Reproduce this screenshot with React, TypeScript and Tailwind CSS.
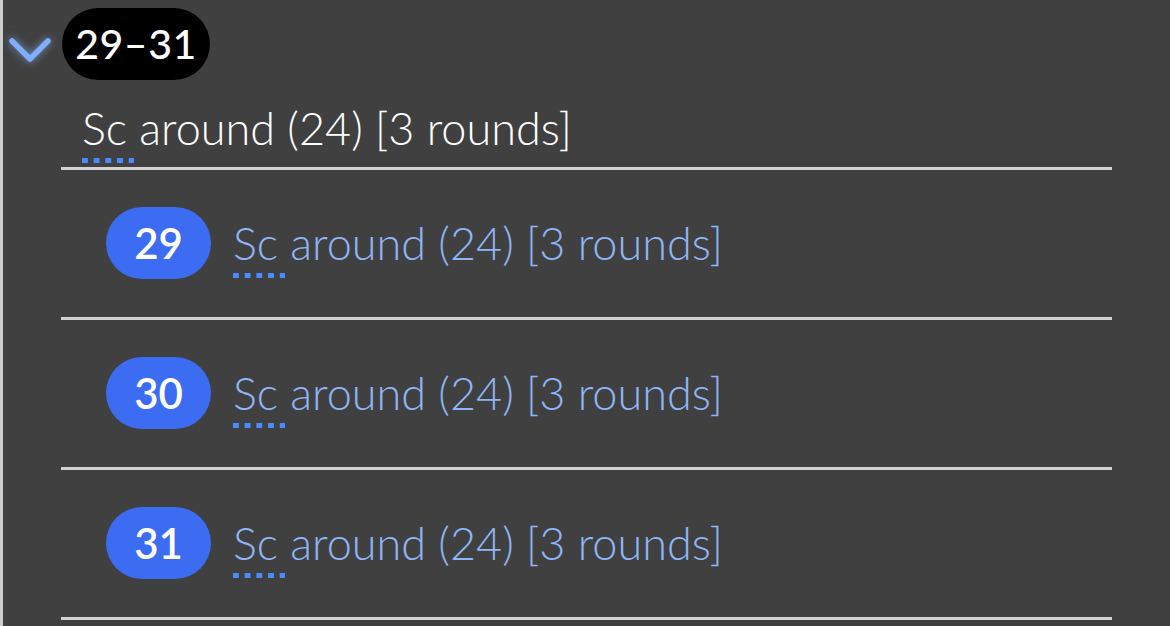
const rows = ["29", "30", "31"];

const Dotted = ({ children }: { children: string }) => (
  <span className="relative">
    {children}
    <span className="absolute left-0 w-[52px] bottom-[-8px] h-[5px] bg-[linear-gradient(to_right,#4a8cff_6px,transparent_6px)] bg-[length:11.7px_5px]" />
  </span>
);

export default function App() {
  return (
    <div
      className="h-[626px] w-[1170px] overflow-hidden border-l-[3px] border-[#cdcdcd] bg-[#404040] text-white"
      style={{ fontFamily: "Lato, 'Noto Sans', sans-serif" }}
    >
      <div className="flex h-[88px] items-start pt-[8px]">
        <svg
          width="59"
          height="72"
          viewBox="0 0 59 72"
          className="drop-shadow-[0_0_4px_rgba(140,180,255,0.7)]"
        >
          <polyline
            points="9,33 27,51 45,33"
            fill="none"
            stroke="#7eaefc"
            strokeWidth="5.5"
            strokeLinecap="round"
            strokeLinejoin="round"
          />
        </svg>
        <div className="flex h-[72px] w-[148px] items-center justify-center rounded-full bg-black text-[41px] font-medium tracking-[0.5px]">
          29–31
        </div>
      </div>

      <div className="ml-[58px] w-[1051px]">
        <div className="h-[82px] border-b-[3px] border-[#d2d2d2] pl-[21px] pt-[14px] text-[45px] leading-[52px] font-light">
          <Dotted>Sc</Dotted> around (24) [3 rounds]
        </div>
        {rows.map((n) => (
          <div
            key={n}
            className="flex h-[150px] items-center gap-[22px] border-b-[3px] border-[#d2d2d2] pb-[1px] pl-[45px]"
          >
            <div className="flex h-[72px] w-[105px] items-center justify-center rounded-full bg-[#3b6cf2] text-[42px] font-semibold">
              {n}
            </div>
            <div className="text-[45px] leading-[52px] font-light text-[#8eb5f5]">
              <Dotted>Sc</Dotted> around (24) [3 rounds]
            </div>
          </div>
        ))}
      </div>
    </div>
  );
}
